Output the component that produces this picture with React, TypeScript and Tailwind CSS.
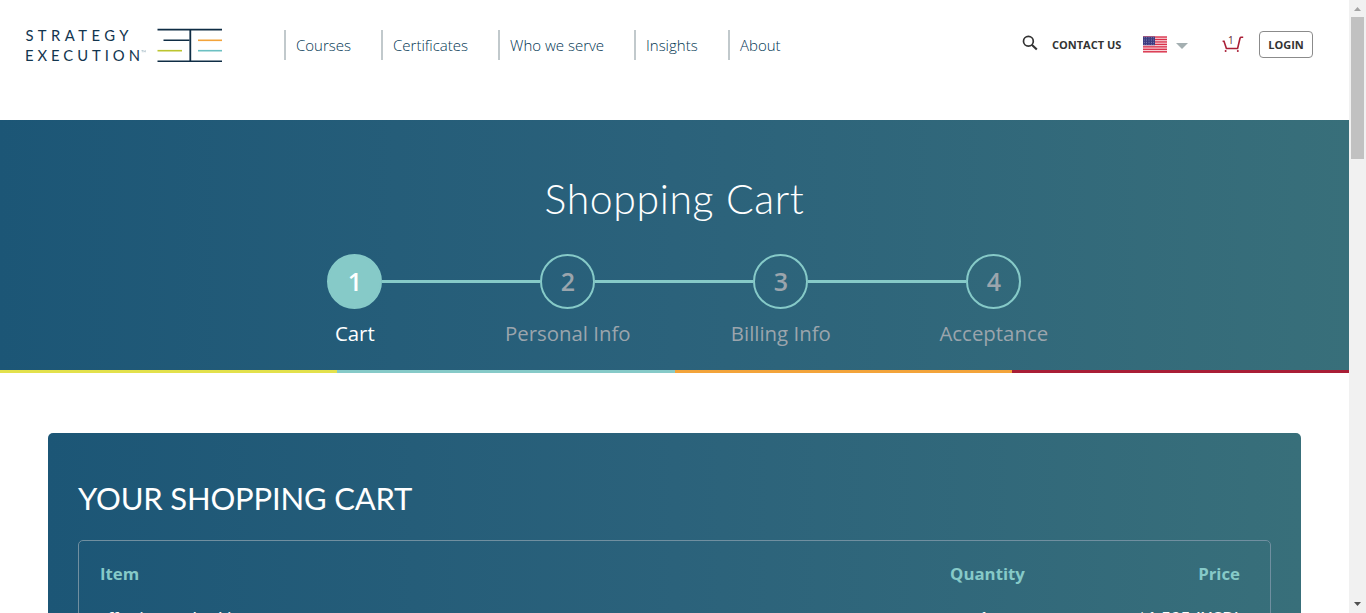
import { ReactNode } from "react";

const nav = [
  { label: "Courses", width: "w-[97px]" },
  { label: "Certificates", width: "w-[117px]" },
  { label: "Who we serve", width: "w-[136px]" },
  { label: "Insights", width: "w-[94px]" },
  { label: "About", width: "w-[94px]" },
];

const steps = ["Cart", "Personal Info", "Billing Info", "Acceptance"];

function Logo() {
  return (
    <svg className="block h-[60px] w-[230px]" viewBox="10 15 230 60" fill="none">
      <g fill="#12354f" fontFamily="Lato, sans-serif" fontSize="14.8">
        <text x="25.4" y="40.5" textLength="103">STRATEGY</text>
        <text x="25" y="60.5" textLength="115">EXECUTION</text>
      </g>
      <path d="M141.5 50.5h1.6M142.3 50.5v1.8M143.8 52.3v-1.8l.8 1 .8-1v1.8" stroke="#7797aa" strokeWidth="0.4" />
      <g stroke="#0f2d45" strokeWidth="2">
        <path d="M157.5 29.6h64.5M157.5 61.2h64.5M163.5 40.3h26" strokeWidth="1.6" />
        <path d="M190.3 29v32" strokeWidth="1.8" />
      </g>
      <path d="M198 40.3h24" stroke="#f3a43b" strokeWidth="1.6" />
      <path d="M157.5 50.7h24.5" stroke="#bcc52f" strokeWidth="1.6" />
      <path d="M198 50.7h24" stroke="#6cc0c2" strokeWidth="1.6" />
    </svg>
  );
}

function Flag() {
  const stripes = [0, 1, 2, 3, 4, 5, 6];
  const stars = [0, 1, 2, 3, 4];
  return (
    <svg className="h-[17px] w-6" viewBox="0 0 24 17">
      <rect width="24" height="17" fill="#f7d3d8" />
      {stripes.map((i) => (
        <rect key={i} y={i * 2.45 + 0.4} width="24" height="1.3" fill="#d9304a" />
      ))}
      <rect y="0.6" width="12" height="8.6" fill="#3c3b80" />
      {stars.map((r) =>
        stars.map((c) => (
          <circle key={`${r}-${c}`} cx={1.2 + c * 2.4} cy={1.4 + r * 1.7} r="0.4" fill="#c4c4df" />
        )),
      )}
    </svg>
  );
}

function Cart() {
  return (
    <div className="relative">
      <svg className="block h-[18px] w-[22px]" viewBox="0 0 22 18" fill="none">
        <path d="M0.6 5.3h1.4l2.4 7.2h11.2L18 2.2q.3-.9 1.2-.9h2" stroke="#a91e36" strokeWidth="1.6" />
        <circle cx="3.6" cy="15" r="1" fill="#a91e36" />
        <circle cx="15.8" cy="15" r="1" fill="#a91e36" />
      </svg>
      <span className="absolute left-[6px] top-[-3px] text-[10px] font-normal leading-[14px] text-[#5e1c2a]">1</span>
    </div>
  );
}

function Header() {
  return (
    <header className="flex h-[120px] items-start">
      <div className="ml-[10px] mt-[15px] w-[274px]"><Logo /></div>
      <nav className="mt-[30px] flex">
        {nav.map((n) => (
          <a key={n.label} className={`${n.width} h-[30px] border-l-2 border-[#c1c9cc] pl-[10px] text-[15px] font-light leading-[30px] text-[#003552]`}>
            {n.label}
          </a>
        ))}
      </nav>
      <div className="ml-auto mr-9 mt-[31px] flex h-[27px] items-center text-[11px] font-bold text-[#333]">
        <svg className="mr-[14px] mb-[4px] size-4" viewBox="0 0 16 16" fill="none" stroke="#333" strokeWidth="1.7">
          <circle cx="6.4" cy="6.2" r="4.9" />
          <path d="m9.8 9.8 5 4.8" strokeWidth="2.1" />
        </svg>
        <span className="w-[91px] pt-px">CONTACT US</span>
        <Flag />
        <svg className="ml-[9px] mt-[2px] h-[6px] w-3" viewBox="0 0 12 6"><path d="M0 0h12L6 6Z" fill="#a4afb1" /></svg>
        <div className="ml-[34px] mr-[15px]"><Cart /></div>
        <button className="h-[27px] w-[54px] rounded-[4px] border border-[#8b8b8b] pt-px">LOGIN</button>
      </div>
    </header>
  );
}

function Hero() {
  return (
    <section className="flex h-[253px] flex-col bg-linear-to-r from-[#1c5676] via-[#2b627b] to-[#386f7a]">
      <h1 className="mt-[49px] text-center font-['Lato'] text-[41px] font-light leading-[60px] tracking-[0.6px] text-white">Shopping Cart</h1>
      <div className="ml-[248.3px] mt-[24.5px] grid w-[852px] grid-cols-4">
        {steps.map((s, i) => (
          <div key={s} className={`flex flex-col items-center whitespace-nowrap ${i ? "text-[#9ba5ad]" : "text-white"}`}>
            <div className="flex w-full items-center">
              <div className={`h-[3px] flex-1 ${i ? "bg-[#86cac8]" : ""}`} />
              <div className={`flex size-[55px] items-center justify-center rounded-full border-2 border-[#86cac8] pt-px text-[25px] font-semibold ${i ? "" : "bg-[#86cac8]"}`}>{i + 1}</div>
              <div className={`h-[3px] flex-1 ${i < 3 ? "bg-[#86cac8]" : ""}`} />
            </div>
            <span className="mt-[9.5px] text-[20.4px] leading-[30px]">{s}</span>
          </div>
        ))}
      </div>
      <div className="mt-auto grid h-[3px] grid-cols-4">
        <i className="bg-[#e3e14c]" /><i className="bg-[#86cac8]" /><i className="bg-[#f3a43b]" /><i className="bg-[#a91e36]" />
      </div>
    </section>
  );
}

function Row({ children }: { children: ReactNode }) {
  return <div className="grid grid-cols-[799px_177px_1fr] pl-[21px] pr-[30px]">{children}</div>;
}

function CartPanel() {
  return (
    <section className="ml-12 mt-[60px] h-[400px] w-[1253px] rounded-[5px] bg-linear-to-r from-[#1c5676] via-[#2b627b] to-[#386f7a] px-[30px] pt-[42px]">
      <h2 className="font-['Lato'] text-[31px] leading-[46px] tracking-[-0.17px] text-white">YOUR SHOPPING CART</h2>
      <div className="mt-[19px] h-[300px] rounded-[5px] border border-[#708fa0] pt-[21px]">
        <div className="text-[16.8px] font-bold leading-[24px] text-[#86cac8]">
          <Row><span>Item</span><span className="text-center">Quantity</span><span className="text-right">Price</span></Row>
        </div>
        <div className="mt-[20px] text-[16px] font-semibold leading-[24px] text-white">
          <Row><span className="text-[14.4px]">Effective Leadership</span><span className="pr-[8px] text-center text-[17px]">1</span><span className="text-right text-[17px]">$1,595 (USD)</span></Row>
        </div>
      </div>
    </section>
  );
}

export default function App() {
  return (
    <div className="flex h-[613px] w-[1366px] overflow-hidden bg-white font-['Open_Sans',sans-serif]">
      <main className="w-[1349px] shrink-0"><Header /><Hero /><CartPanel /></main>
      <aside className="flex w-[17px] flex-col items-center bg-[#f1f1f1]">
        <svg className="mt-[7px] h-1 w-[7px]" viewBox="0 0 7 4"><path d="M0 4 3.5 0 7 4Z" fill="#a3a3a3" /></svg>
        <div className="mt-[6px] h-[142px] w-[13px] bg-[#c1c1c1]" />
        <svg className="mb-[7px] mt-auto h-1 w-[7px]" viewBox="0 0 7 4"><path d="M0 0h7L3.5 4Z" fill="#505050" /></svg>
      </aside>
    </div>
  );
}
